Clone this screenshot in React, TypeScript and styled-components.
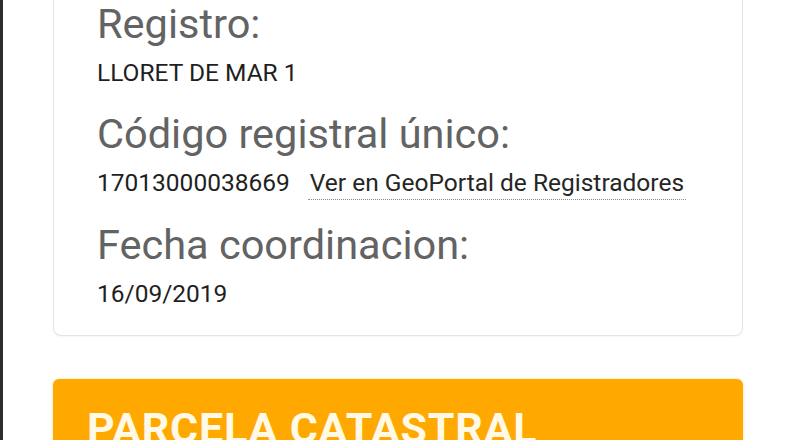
import React from "react";
import styled, { createGlobalStyle } from "styled-components";

const Global = createGlobalStyle`
  html, body {
    margin: 0;
    padding: 0;
    background: #ffffff;
  }
  body {
    font-family: Roboto, "Noto Sans", "Liberation Sans", sans-serif;
    overflow: hidden;
  }
`;

const Screen = styled.div`
  display: flex;
  width: 790px;
  height: 440px;
  overflow: hidden;
  background: #ffffff;
`;

const EdgeStrip = styled.div`
  width: 3px;
  flex: 0 0 3px;
  background: #2e2e2e;
`;

const Page = styled.main`
  flex: 1;
  display: flex;
  flex-direction: column;
  padding: 0 47px 0 50px;
`;

const Card = styled.section`
  display: flex;
  flex-direction: column;
  gap: 23px;
  padding: 2px 20px 25px 43px;
  background: #ffffff;
  border: 1px solid #e4e4e4;
  border-top: none;
  border-radius: 0 0 8px 8px;
  box-shadow: 0 1px 2px rgba(0, 0, 0, 0.04);
`;

const Field = styled.div`
  display: flex;
  flex-direction: column;
`;

const Label = styled.div`
  font-size: 41.5px;
  line-height: 44px;
  color: #636363;
  white-space: nowrap;
`;

const Value = styled.div`
  margin-top: 11px;
  display: flex;
  align-items: baseline;
  gap: 20px;
  font-size: 24.5px;
  line-height: 32px;
  color: #1f1f1f;
  white-space: nowrap;
`;

const Link = styled.a`
  color: #262626;
  text-decoration: none;
  padding: 0 2px;
  margin-left: -2px;
  border-bottom: 1px dotted #8a8a8a;
  cursor: pointer;
`;

const SectionHeader = styled.header`
  margin-top: 43px;
  padding: 25px 34px 20px;
  background: #ffa900;
  border-radius: 6px 6px 0 0;
  box-shadow: 0 0 3px rgba(255, 169, 0, 0.35);
`;

const SectionTitle = styled.h2`
  margin: 0;
  font-size: 43px;
  line-height: 48px;
  font-weight: 700;
  letter-spacing: 0.8px;
  color: #fff9e6;
  white-space: nowrap;
`;

const fields = [
  { label: "Registro:", value: "LLORET DE MAR 1" },
  {
    label: "Código registral único:",
    value: "17013000038669",
    link: "Ver en GeoPortal de Registradores",
  },
  { label: "Fecha coordinacion:", value: "16/09/2019" },
];

export default function App() {
  return (
    <>
      <Global />
      <Screen>
        <EdgeStrip />
        <Page>
          <Card>
            {fields.map((f) => (
              <Field key={f.label}>
                <Label>{f.label}</Label>
                <Value>
                  <span>{f.value}</span>
                  {f.link && <Link>{f.link}</Link>}
                </Value>
              </Field>
            ))}
          </Card>
          <SectionHeader>
            <SectionTitle>PARCELA CATASTRAL</SectionTitle>
          </SectionHeader>
        </Page>
      </Screen>
    </>
  );
}
